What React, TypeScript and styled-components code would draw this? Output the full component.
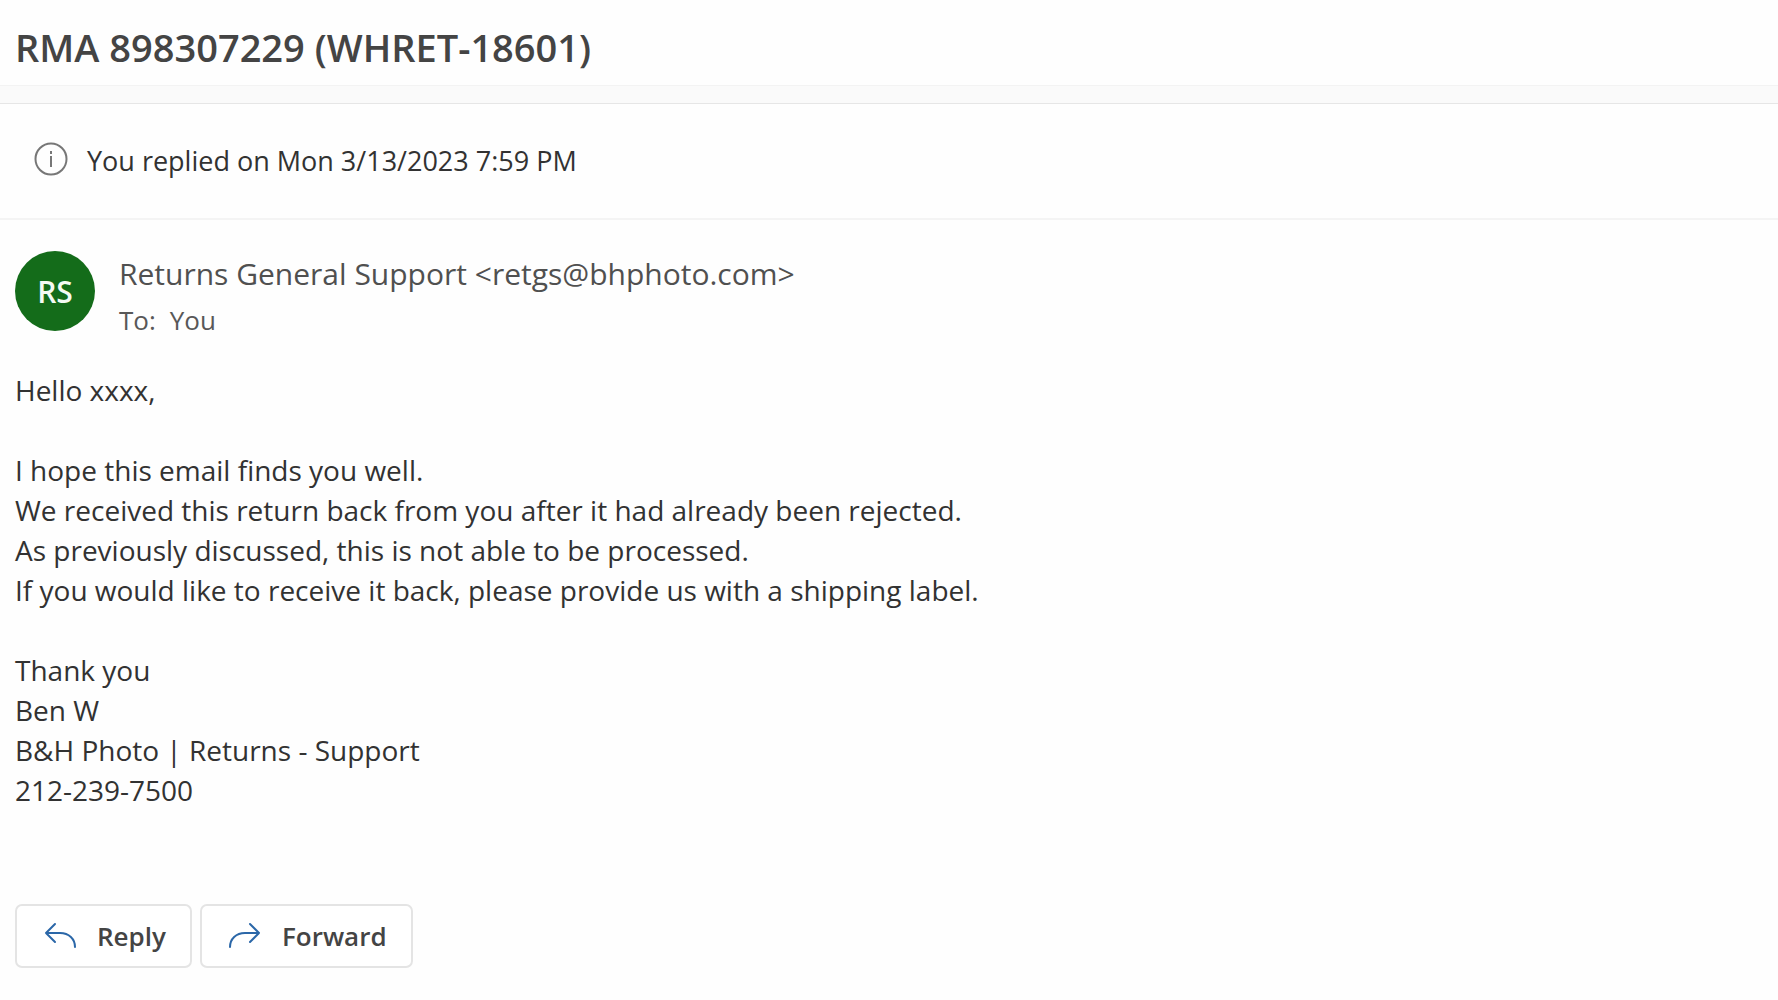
import React from 'react';
import styled, { createGlobalStyle } from 'styled-components';

const Global = createGlobalStyle`
  * { box-sizing: border-box; }
  body {
    margin: 0;
    background: #fefefe;
    color: #323232;
    font-family: "Segoe UI", "Open Sans", "Noto Sans", sans-serif;
  }
`;
const Header = styled.header`
  padding: 19px 15px 10px;
`;
const Title = styled.h1`
  margin: 0;
  font-size: 38px;
  line-height: 56px;
  font-weight: 600;
  color: #444;
`;
const Band = styled.div`
  height: 19px;
  background: #fafafa;
  border-top: 1px solid #f3f3f3;
  border-bottom: 1px solid #e6e6e6;
`;
const Notice = styled.div`
  display: flex;
  align-items: center;
  gap: 19px;
  padding: 36px 34px;
  border-bottom: 2px solid #f4f4f4;
  font-size: 27px;
  line-height: 42px;
`;
const InfoIcon = styled.svg`
  width: 34px;
  height: 34px;
  margin-bottom: 4px;
  fill: none;
  stroke: #777;
  stroke-width: 2;
`;
const Sender = styled.section`
  display: flex;
  gap: 24px;
  padding: 31px 15px 0;
`;
const Avatar = styled.div`
  display: grid;
  place-items: center;
  width: 80px;
  height: 80px;
  border-radius: 50%;
  background: #146c1a;
  color: #f4fbf4;
  font-size: 30px;
  font-weight: 600;
`;
const From = styled.div`
  font-size: 30px;
  line-height: 46px;
  color: #505050;
`;
const To = styled.div`
  display: flex;
  gap: 14px;
  font-size: 26px;
  line-height: 46px;
  color: #585858;
`;
const Body = styled.article`
  padding: 27px 15px 0;
  font-size: 28px;
  line-height: 40px;
`;
const Para = styled.p`
  margin: 0 0 40px;
`;
const Actions = styled.footer`
  display: flex;
  gap: 8px;
  padding: 54px 15px 32px;
`;
const Button = styled.button`
  display: flex;
  align-items: center;
  gap: 20px;
  height: 64px;
  padding: 0 24px 0 26px;
  border: 2px solid #e4e4e4;
  border-radius: 7px;
  background: #fff;
  color: #444;
  font-family: inherit;
  font-size: 26px;
  line-height: 40px;
  font-weight: 600;
`;
const Arrow = styled.svg`
  width: 34px;
  height: 28px;
  fill: none;
  stroke: #2b67a8;
  stroke-width: 2;
  stroke-linecap: round;
  stroke-linejoin: round;
`;

export default function App() {
  return (
    <>
      <Global />
      <Header>
        <Title>RMA 898307229 (WHRET-18601)</Title>
      </Header>
      <Band />
      <Notice>
        <InfoIcon viewBox="0 0 34 34" aria-hidden="true">
          <circle cx="17" cy="17" r="15.5" />
          <path d="M17 14v11M17 9v3" />
        </InfoIcon>
        <span>You replied on Mon 3/13/2023 7:59 PM</span>
      </Notice>
      <Sender>
        <Avatar>RS</Avatar>
        <div>
          <From>Returns General Support &lt;retgs@bhphoto.com&gt;</From>
          <To>
            <span>To:</span>
            <span>You</span>
          </To>
        </div>
      </Sender>
      <Body>
        <Para>Hello xxxx,</Para>
        <Para>
          I hope this email finds you well.<br />
          We received this return back from you after it had already been rejected.<br />
          As previously discussed, this is not able to be processed.<br />
          If you would like to receive it back, please provide us with a shipping label.
        </Para>
        <Para>
          Thank you<br />
          Ben W<br />
          B&amp;H Photo | Returns - Support<br />
          212-239-7500
        </Para>
      </Body>
      <Actions>
        <Button type="button">
          <Arrow viewBox="0 0 34 28" aria-hidden="true">
            <path d="M12 2L3 11l9 9M3 11h14c9 0 15 6 15 14" />
          </Arrow>
          Reply
        </Button>
        <Button type="button">
          <Arrow viewBox="0 0 34 28" aria-hidden="true">
            <path d="M22 2l9 9-9 9M31 11H17C8 11 2 17 2 25" />
          </Arrow>
          Forward
        </Button>
      </Actions>
    </>
  );
}
